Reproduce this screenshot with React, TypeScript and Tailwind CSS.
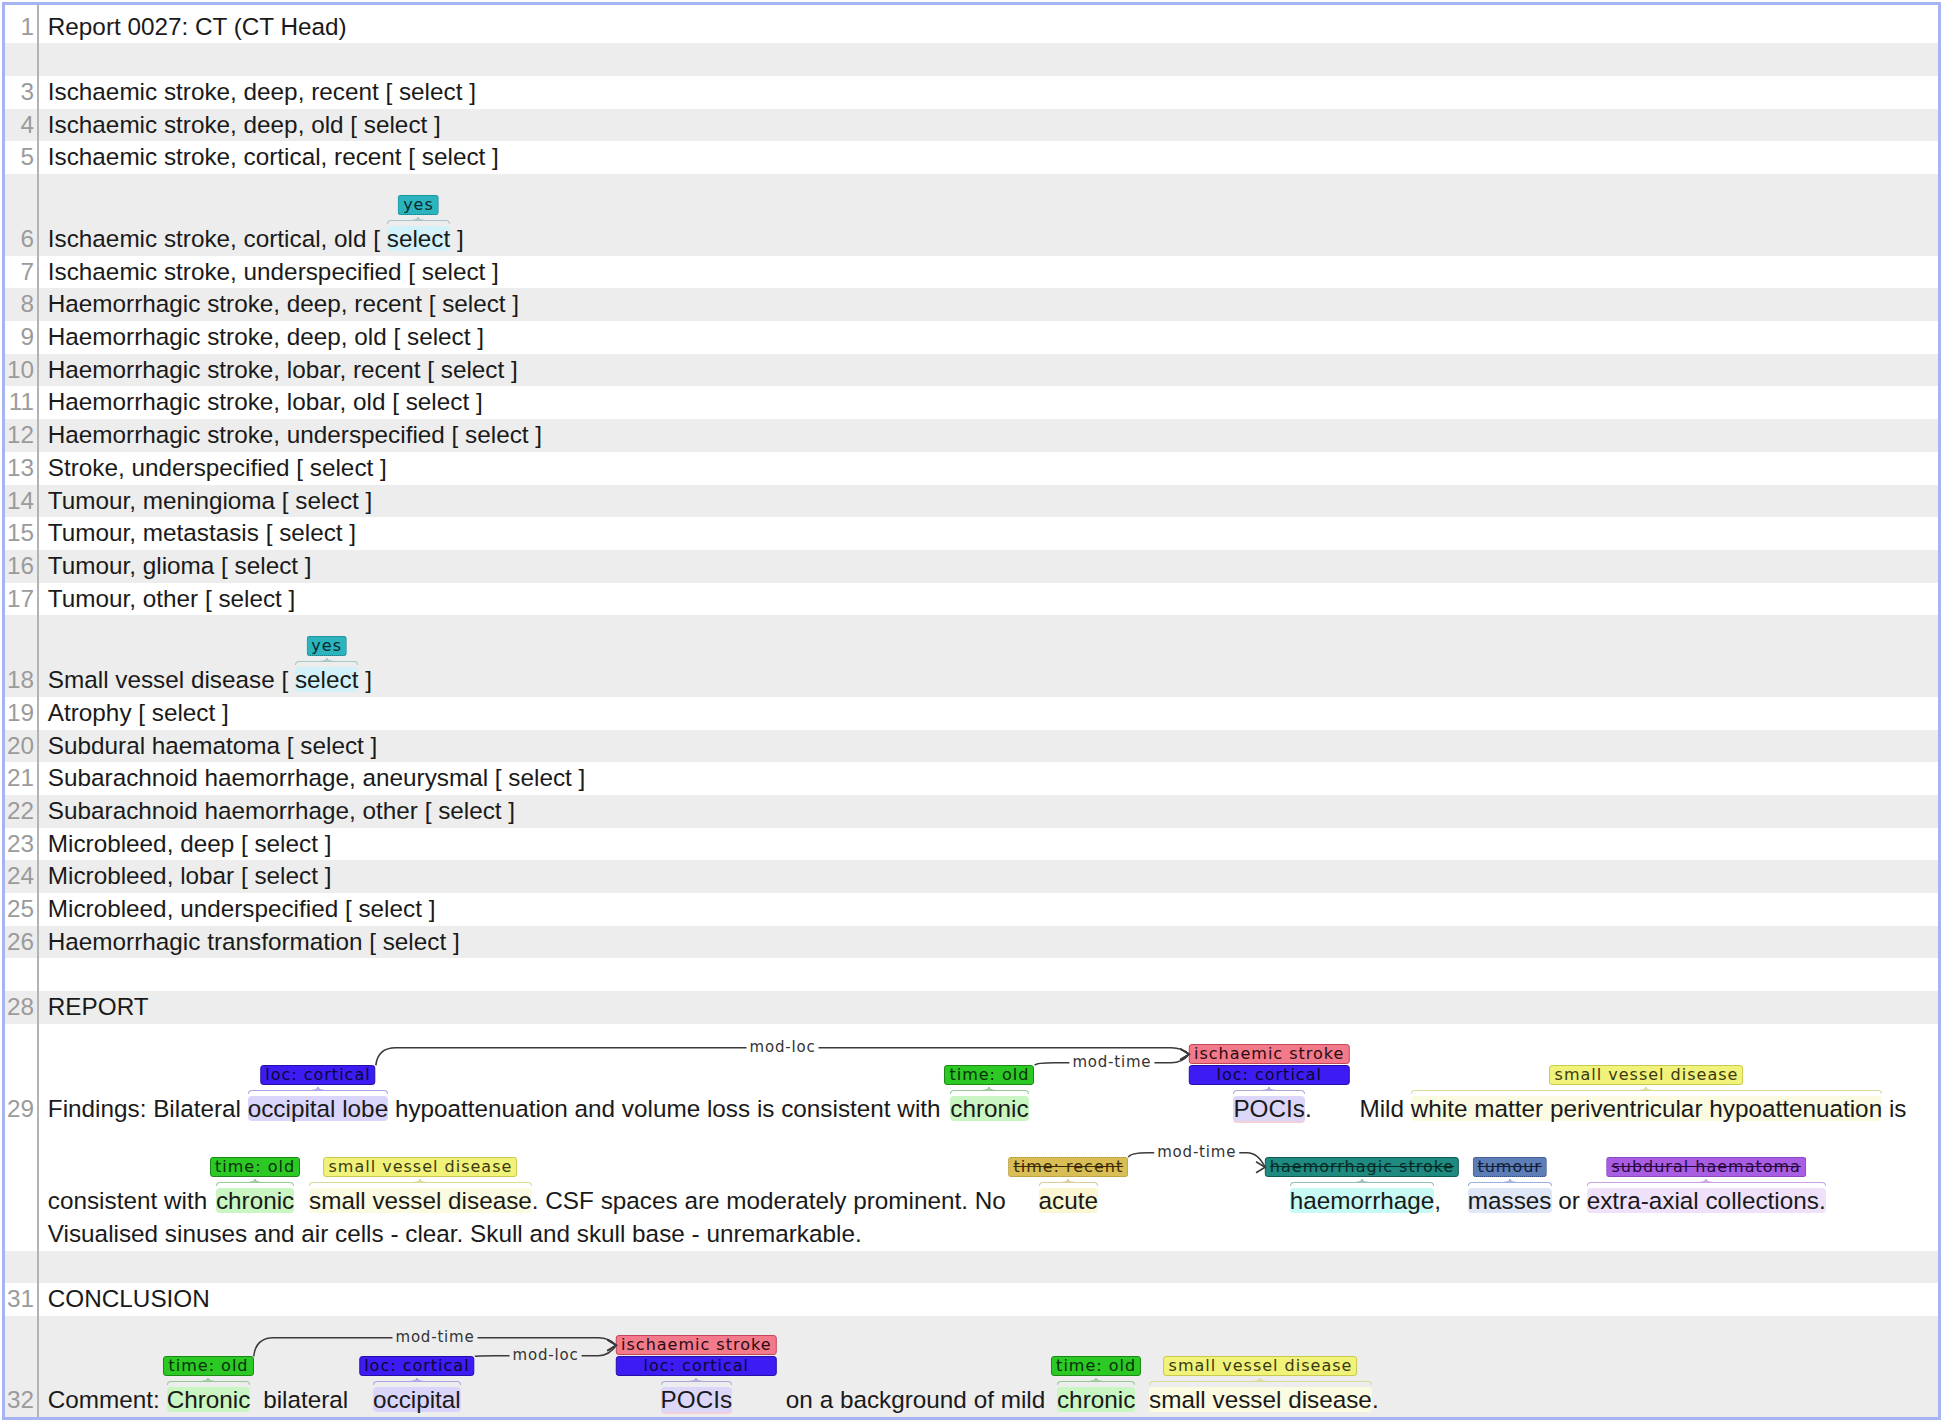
import React, { useLayoutEffect, useRef, useState } from 'react';

// --- row / line metrics ---
const ROW_H = 'h-[32.7px] leading-[32.7px]';

// --- annotation types: label colours, span highlight, brace colour ---
const T = {
  loc: { text: 'loc: cortical', label: 'bg-[#3c1cf2] border-[#2410a8] text-[#0b0736]', hl: 'bg-[#dad5fa]', brace: 'border-[#aaa3e8]', peak: '#aaa3e8' },
  isch: { text: 'ischaemic stroke', label: 'bg-[#f27a8a] border-[#c2455a] text-[#2a0a12]', hl: 'bg-[#fbdde2]', brace: 'border-[#e2a0aa]', peak: '#e2a0aa' },
  pocis: { text: '', label: '', hl: 'bg-[#dcd7f8] shadow-[0_2px_0_0_#f3cfd9]', brace: 'border-[#b0a8d8]', peak: '#b0a8d8' },
  old: { text: 'time: old', label: 'bg-[#2cc823] border-[#1b8a15] text-[#08300a]', hl: 'bg-[#c9f6c2]', brace: 'border-[#98c898]', peak: '#98c898' },
  svd: { text: 'small vessel disease', label: 'bg-[#f1f27a] border-[#c9c94e] text-[#3a3a10]', hl: 'bg-[#fbfbe2]', brace: 'border-[#dada98]', peak: '#dada98' },
  recent: { text: 'time: recent', label: 'bg-[#d9bd55] border-[#a88c30] border-dotted text-[#3a2a08] line-through', hl: 'bg-[#fbf7d3]', brace: 'border-[#d8cc98]', peak: '#d8cc98' },
  haem: { text: 'haemorrhagic stroke', label: 'bg-[#1f8a80] border-[#0e5a52] text-[#062a26] line-through', hl: 'bg-[#c7faf5]', brace: 'border-[#98bcb8]', peak: '#98bcb8' },
  tumour: { text: 'tumour', label: 'bg-[#5c7db5] border-[#2e4a82] border-dotted text-[#121e3a] line-through', hl: 'bg-[#dfe6f6]', brace: 'border-[#9eb0e0]', peak: '#9eb0e0' },
  subdural: { text: 'subdural haematoma', label: 'bg-[#a95de2] border-[#7232a4] border-dotted text-[#26083e] line-through', hl: 'bg-[#efe1fa]', brace: 'border-[#c8a2e2]', peak: '#c8a2e2' },
  yes: { text: 'yes', label: 'bg-[#2bb4be] border-[#167580] border-dotted text-[#07282c]', hl: 'bg-[#d3f1f8]', brace: 'border-[#a9c6c8]', peak: '#a9c6c8' },
};

type K = keyof typeof T;
type Lbl = { k: K; id?: string };
type Arc = { from: string; to: string; label: string; y: number };

// width of the relation names, to cut the arc line round them
const TW: Record<string, number> = { 'mod-loc': 66, 'mod-time': 79 };

const Brace = ({ c, peak }: { c: string; peak: string }) => (
  <span className="absolute left-0 right-0 bottom-full mb-[2px] h-[7px] flex items-end">
    <span className={`flex-1 h-[4px] border-t-[1.5px] border-l-[1.5px] rounded-tl-[5px] ${c}`} />
    <span className={`flex-1 h-[4px] border-t-[1.5px] border-r-[1.5px] rounded-tr-[5px] ${c}`} />
    <svg className="absolute left-1/2 top-0 -translate-x-1/2" width="12" height="4" viewBox="0 0 12 4">
      <path d="M0 3.5 Q6 3.5 6 0 Q6 3.5 12 3.5" fill="none" stroke={peak} strokeWidth="1.5" />
    </svg>
  </span>
);

const Ann = ({ t, labels, ml = '', children }: { t: K; labels: Lbl[]; ml?: string; children: React.ReactNode }) => {
  const s = T[t];
  return (
    <span className={`relative inline-block leading-[25px] rounded-[4px] ${s.hl} ${ml}`}>
      <span className="absolute left-1/2 bottom-full mb-[11px] -translate-x-1/2 flex flex-col items-stretch gap-[1px]">
        {labels.map((l, i) => {
          const lt = T[l.k];
          return (
            <span
              key={i}
              data-lbl={l.id}
              className={`block h-[20px] px-[4px] rounded-[3px] border text-center leading-[18px] whitespace-nowrap font-['DejaVu_Sans',sans-serif] text-[16px] tracking-[1px] ${lt.label}`}
            >
              {lt.text}
            </span>
          );
        })}
      </span>
      <Brace c={s.brace} peak={s.peak} />
      {children}
    </span>
  );
};

// one visual line with room for labels above it, and the relation arcs
const AnnLine = ({ pt, bg, arcs = [], children }: { pt: string; bg: string; arcs?: Arc[]; children: React.ReactNode }) => {
  const ref = useRef<HTMLDivElement>(null);
  const [geo, setGeo] = useState<{ sx: number; sy: number; tx: number; ty: number; y: number; label: string }[]>([]);

  useLayoutEffect(() => {
    const measure = () => {
      const el = ref.current;
      if (!el || !arcs.length) return;
      const b = el.getBoundingClientRect();
      const r = (id: string) => el.querySelector(`[data-lbl="${id}"]`)!.getBoundingClientRect();
      setGeo(
        arcs.map((a) => {
          const f = r(a.from);
          const to = r(a.to);
          return { sx: f.right - b.left, sy: f.top - b.top, tx: to.left - b.left, ty: to.top + to.height / 2 - b.top, y: a.y, label: a.label };
        })
      );
    };
    measure();
    document.fonts?.ready.then(measure);
  }, []);

  return (
    <div ref={ref} className={`relative ${pt}`}>
      <div className={`${ROW_H} whitespace-pre`}>{children}</div>
      <svg className="absolute left-0 top-0 overflow-visible pointer-events-none" width="1" height="1">
        {geo.map((g, i) => {
          const mid = (g.sx + g.tx) / 2;
          const w = TW[g.label] ?? 70;
          const d = `M${g.sx} ${g.sy} Q${g.sx + 2} ${g.y} ${g.sx + 20} ${g.y} L${g.tx - 18} ${g.y} Q${g.tx - 7} ${g.y} ${g.tx} ${g.ty}`;
          return (
            <g key={i}>
              <path d={d} fill="none" stroke="#3a3a3a" strokeWidth="1.6" />
              <rect x={mid - w / 2 - 3} y={g.y - 8} width={w + 6} height={16} fill={bg} />
              <text x={mid} y={g.y + 4.5} textAnchor="middle" fontFamily="DejaVu Sans, sans-serif" fontSize="15" letterSpacing="0.8" fill="#333">
                {g.label}
              </text>
              <polyline points={`${g.tx - 9},${g.ty - 5.5} ${g.tx},${g.ty} ${g.tx - 9},${g.ty + 5.5}`} fill="none" stroke="#3a3a3a" strokeWidth="1.6" />
            </g>
          );
        })}
      </svg>
    </div>
  );
};

const Row = ({ n, np = '', cp = '', children }: { n: number; np?: string; cp?: string; children?: React.ReactNode }) => (
  <div className={`flex ${n % 2 === 0 ? 'bg-[#ededed]' : 'bg-white'}`}>
    <div className={`w-[34px] shrink-0 border-r-2 border-[#b3b3b3] pr-[3px] text-right text-[#9b9b9b] ${np}`}>
      <div className={ROW_H}>{children ? n : ''}</div>
    </div>
    <div className={`min-w-0 flex-1 pl-[8.8px] ${cp}`}>{children ?? <div className={ROW_H} />}</div>
  </div>
);

const Plain = ({ n, text }: { n: number; text?: string }) => (
  <Row n={n}>{text ? <div className={`${ROW_H} whitespace-pre`}>{text}</div> : undefined}</Row>
);

const LINES_A = [
  'Ischaemic stroke, deep, recent [ select ]',
  'Ischaemic stroke, deep, old [ select ]',
  'Ischaemic stroke, cortical, recent [ select ]',
];
const LINES_B = [
  'Ischaemic stroke, underspecified [ select ]',
  'Haemorrhagic stroke, deep, recent [ select ]',
  'Haemorrhagic stroke, deep, old [ select ]',
  'Haemorrhagic stroke, lobar, recent [ select ]',
  'Haemorrhagic stroke, lobar, old [ select ]',
  'Haemorrhagic stroke, underspecified [ select ]',
  'Stroke, underspecified [ select ]',
  'Tumour, meningioma [ select ]',
  'Tumour, metastasis [ select ]',
  'Tumour, glioma [ select ]',
  'Tumour, other [ select ]',
];
const LINES_C = [
  'Atrophy [ select ]',
  'Subdural haematoma [ select ]',
  'Subarachnoid haemorrhage, aneurysmal [ select ]',
  'Subarachnoid haemorrhage, other [ select ]',
  'Microbleed, deep [ select ]',
  'Microbleed, lobar [ select ]',
  'Microbleed, underspecified [ select ]',
  'Haemorrhagic transformation [ select ]',
];

export default function App() {
  return (
    <div className="min-h-screen bg-white p-[2px] font-['Liberation_Sans',Arial,sans-serif] text-[24.3px] text-[#1a1a1a]">
      <div className="w-[1939px] border-[3px] border-[#a6b4f4] bg-white">
        <Row n={1} np="pt-[5.6px]" cp="pt-[5.6px]">
          <div className={`${ROW_H} whitespace-pre`}>Report 0027: CT (CT Head)</div>
        </Row>
        <Plain n={2} />
        {LINES_A.map((t, i) => <Plain key={t} n={i + 3} text={t} />)}

        <Row n={6} np="pt-[49px]">
          <AnnLine pt="pt-[49px]" bg="#ededed">
            {'Ischaemic stroke, cortical, old [ '}
            <Ann t="yes" labels={[{ k: 'yes' }]}>select</Ann>
            {' ]'}
          </AnnLine>
        </Row>

        {LINES_B.map((t, i) => <Plain key={t} n={i + 7} text={t} />)}

        <Row n={18} np="pt-[49px]">
          <AnnLine pt="pt-[49px]" bg="#ededed">
            {'Small vessel disease [ '}
            <Ann t="yes" labels={[{ k: 'yes' }]}>select</Ann>
            {' ]'}
          </AnnLine>
        </Row>

        {LINES_C.map((t, i) => <Plain key={t} n={i + 19} text={t} />)}
        <Plain n={27} />
        <Plain n={28} text="REPORT" />

        <Row n={29} np="pt-[69.3px]">
          <AnnLine
            pt="pt-[69.3px]"
            bg="#ffffff"
            arcs={[
              { from: 'a', to: 'c', label: 'mod-loc', y: 23.8 },
              { from: 'b', to: 'c', label: 'mod-time', y: 38.8 },
            ]}
          >
            {'Findings: Bilateral '}
            <Ann t="loc" labels={[{ k: 'loc', id: 'a' }]}>occipital lobe</Ann>
            {' hypoattenuation and volume loss is consistent with '}
            <Ann t="old" ml="ml-[3px]" labels={[{ k: 'old', id: 'b' }]}>chronic</Ann>
            {' '}
            <Ann t="pocis" ml="ml-[198px]" labels={[{ k: 'isch', id: 'c' }, { k: 'loc' }]}>POCIs</Ann>
            {'. '}
            <span className="ml-[41px]">Mild</span>
            {' '}
            <Ann t="svd" labels={[{ k: 'svd' }]}>white matter periventricular hypoattenuation</Ann>
            {' is'}
          </AnnLine>
          <AnnLine pt="pt-[59.3px]" bg="#ffffff" arcs={[{ from: 'd', to: 'e', label: 'mod-time', y: 26.8 }]}>
            {'consistent with '}
            <Ann t="old" ml="ml-[2px]" labels={[{ k: 'old' }]}>chronic</Ann>
            {' '}
            <Ann t="svd" ml="ml-[8px]" labels={[{ k: 'svd' }]}>small vessel disease</Ann>
            {'. CSF spaces are moderately prominent. No '}
            <Ann t="recent" ml="ml-[26px]" labels={[{ k: 'recent', id: 'd' }]}>acute</Ann>
            {' '}
            <Ann t="haem" ml="ml-[185px]" labels={[{ k: 'haem', id: 'e' }]}>haemorrhage</Ann>
            {', '}
            <Ann t="tumour" ml="ml-[20px]" labels={[{ k: 'tumour' }]}>masses</Ann>
            {' or '}
            <Ann t="subdural" labels={[{ k: 'subdural' }]}>extra-axial collections.</Ann>
          </AnnLine>
          <div className={`${ROW_H} whitespace-pre`}>
            Visualised sinuses and air cells - clear. Skull and skull base - unremarkable.
          </div>
        </Row>

        <Plain n={30} />
        <Plain n={31} text="CONCLUSION" />

        <Row n={32} np="pt-[68.3px]">
          <AnnLine
            pt="pt-[68.3px]"
            bg="#ededed"
            arcs={[
              { from: 'm', to: 'o', label: 'mod-time', y: 21.7 },
              { from: 'n', to: 'o', label: 'mod-loc', y: 39.7 },
            ]}
          >
            {'Comment: '}
            <Ann t="old" labels={[{ k: 'old', id: 'm' }]}>Chronic</Ann>
            {' '}
            <span className="ml-[6px]">bilateral</span>
            {' '}
            <Ann t="loc" ml="ml-[18px]" labels={[{ k: 'loc', id: 'n' }]}>occipital</Ann>
            {' '}
            <Ann t="pocis" ml="ml-[193px]" labels={[{ k: 'isch', id: 'o' }, { k: 'loc' }]}>POCIs</Ann>
            {' '}
            <span className="ml-[47px]">on a background of mild</span>
            {' '}
            <Ann t="old" ml="ml-[5px]" labels={[{ k: 'old' }]}>chronic</Ann>
            {' '}
            <Ann t="svd" ml="ml-[7px]" labels={[{ k: 'svd' }]}>small vessel disease</Ann>
            {'.'}
          </AnnLine>
        </Row>
      </div>
    </div>
  );
}
